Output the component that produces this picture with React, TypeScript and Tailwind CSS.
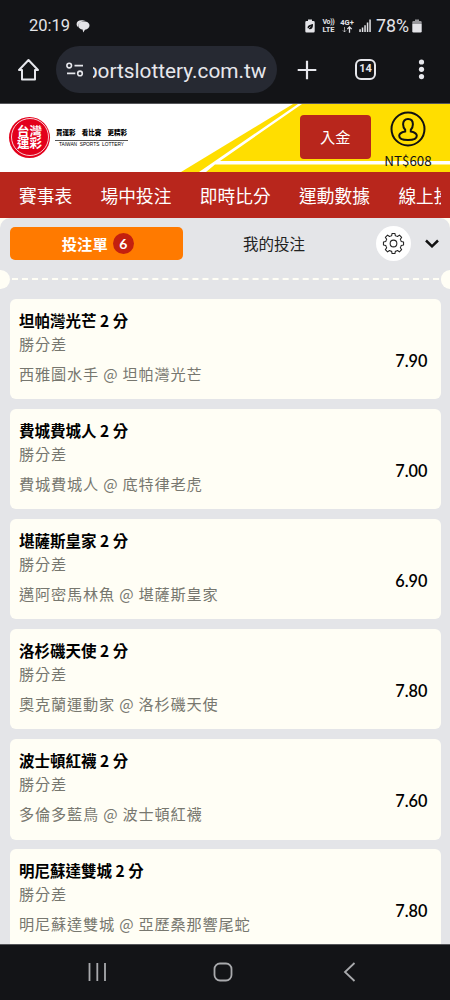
type Bet = {
  pick: string;
  market: string;
  match: string;
  odds: string;
};

const bets: Bet[] = [
  { pick: "坦帕灣光芒 2 分", market: "勝分差", match: "西雅圖水手 @ 坦帕灣光芒", odds: "7.90" },
  { pick: "費城費城人 2 分", market: "勝分差", match: "費城費城人 @ 底特律老虎", odds: "7.00" },
  { pick: "堪薩斯皇家 2 分", market: "勝分差", match: "邁阿密馬林魚 @ 堪薩斯皇家", odds: "6.90" },
  { pick: "洛杉磯天使 2 分", market: "勝分差", match: "奧克蘭運動家 @ 洛杉磯天使", odds: "7.80" },
  { pick: "波士頓紅襪 2 分", market: "勝分差", match: "多倫多藍鳥 @ 波士頓紅襪", odds: "7.60" },
  { pick: "明尼蘇達雙城 2 分", market: "勝分差", match: "明尼蘇達雙城 @ 亞歷桑那響尾蛇", odds: "7.80" },
];

const navItems = ["賽事表", "場中投注", "即時比分", "運動數據", "線上投注"];

const StatusBar = () => (
  <div className="flex h-[46px] items-center pt-[5px] pl-[29px] pr-[28px] text-[#e4e4e8]">
    <span className="font-['Roboto'] text-[16.5px] leading-5">20:19</span>
    <svg className="ml-[6px] h-[14px] w-[14px]" viewBox="0 0 14 14" fill="currentColor">
      <path d="M5.500 1.200C2.500 1.200.6 2.800.6 5c0 1.300.6 2.300 1.400 3.100C1.800 5 4.200 2.300 9.500 2.100 8.500 1.500 7 1.200 5.500 1.200Z" />
      <path d="M8 2.500c3.200 0 5.500 1.500 5.500 4 0 2.200-1.900 3.900-4.500 4.200L7.200 13.600l-.6-3C4.300 10.300 2.200 9 2.200 6.500c0-2.500 2.600-4 5.800-4Z" />
    </svg>
    <div className="ml-auto flex items-center">
      <svg className="h-[14px] w-[10px]" viewBox="0 0 10 14">
        <path fill="currentColor" d="M3 .5h4V2h1.500q1.200 0 1.200 1.200v9q0 1.300-1.200 1.300h-7Q.3 13.500.3 12.200v-9Q.3 2 1.500 2H3Z" />
        <path fill="#131417" d="M8 5c.2 3.400-.9 5.300-3.300 5.300-1 0-1.800-.5-2-1.200C2 7 4.500 5.700 8 5Z" />
        <path stroke="#e4e4e8" strokeWidth=".7" d="M2 11 5.500 7.600" />
      </svg>
      <div className="ml-[7px] flex w-[13px] flex-col items-center font-['Roboto'] text-[7.500px] font-bold leading-[7px]">
        <span className="text-[7px] tracking-[-0.300px]">Vo))</span>
        <span>LTE</span>
      </div>
      <div className="ml-[5px] flex w-[14px] flex-col items-center font-['Roboto'] text-[7.500px] font-bold leading-[7px]">
        <span>4G+</span>
        <svg className="h-[7px] w-[12px]" viewBox="0 0 12 7" fill="none" stroke="currentColor">
          <path opacity=".6" d="M3.500 1v5M1.800 4.300 3.500 6l1.700-1.700" />
          <path strokeWidth="1.300" d="M8.500 6.800V1M6.300 3.100 8.500.9l2.200 2.200" />
        </svg>
      </div>
      <svg className="ml-[5px] h-[13px] w-[12px]" viewBox="0 0 12 13" fill="currentColor">
        <path d="M.3 10.300h1.500V13H.3zM2.800 8.500h1.500V13H2.800zM5.300 6.200h1.500V13H5.300zM7.800 3.500h1.500V13H7.800zM10.300.5h1.500V13h-1.500z" />
      </svg>
      <span className="ml-[5px] font-['Roboto'] text-[17.800px] leading-5">78%</span>
      <svg className="ml-[3px] h-[14px] w-[10px]" viewBox="0 0 10 14">
        <path fill="#98989c" d="M3 .5h4V2h1.500Q9.700 2 9.700 3.200V5H.3V3.200Q.3 2 1.500 2H3Z" />
        <path fill="currentColor" d="M.3 5h9.400v7.200q0 1.300-1.200 1.300h-7Q.3 13.500.3 12.200Z" />
      </svg>
    </div>
  </div>
);

const BrowserBar = () => (
  <div className="flex h-[57.500px] items-start border-b border-[#55565a] text-[#e6e7ec]">
    <svg className="ml-[17px] mt-[12px] h-6 w-6" viewBox="0 0 24 24" fill="none" stroke="currentColor" strokeWidth="2" strokeLinejoin="round" strokeLinecap="round">
      <path d="M2 12 11.500 2 21 12h-3v9.500H5V12Z" />
    </svg>
    <div className="ml-[15px] flex h-[47px] w-[221px] items-center rounded-full bg-[#262932] pl-[10px]">
      <svg className="h-[18px] w-[18px] shrink-0" viewBox="0 0 18 18" fill="none" stroke="currentColor" strokeWidth="1.600">
        <circle cx="3.200" cy="4.600" r="2.300" />
        <path d="M8.500 4.600H17M1 12.400h8.300" />
        <circle cx="14" cy="12.400" r="2.300" />
      </svg>
      <div className="ml-[9px] mt-[3px] flex w-[173.500px] justify-end overflow-hidden font-['Roboto'] text-[20.800px] leading-7 whitespace-nowrap">
        sportslottery.com.tw
      </div>
    </div>
    <svg className="ml-[20px] mt-[14px] h-5 w-5" viewBox="0 0 20 20" fill="none" stroke="currentColor" strokeWidth="2.200">
      <path d="M10 .7v18.600M.7 10h18.600" />
    </svg>
    <div className="ml-[38px] mt-[13px] flex h-[21px] w-[21px] items-center justify-center rounded-[6px] border-2 border-[#e6e7ec] font-['Roboto'] text-[11px] font-bold">
      14
    </div>
    <svg className="ml-[42px] mt-[13px] h-[22px] w-2" viewBox="0 0 8 22" fill="currentColor">
      <circle cx="3.500" cy="3" r="2.600" />
      <circle cx="3.500" cy="10.300" r="2.600" />
      <circle cx="3.500" cy="17.600" r="2.600" />
    </svg>
  </div>
);

const SiteHeader = () => (
  <header className="relative flex h-[68px] items-start bg-white">
    <svg className="absolute inset-0 h-full w-full" viewBox="0 0 450 68" preserveAspectRatio="none">
      <path fill="#ffde00" d="M293 0H450V68H181Z" />
      <path fill="#fff" d="M298 0h4L220 57H450v3.500H215L206 68H199Z" />
    </svg>
    <div className="relative ml-[9px] mt-[13px] grid h-[41px] w-[41px] shrink-0 place-items-center rounded-full bg-[#e3001b]">
      <div className="flex h-[38px] w-[38px] flex-col items-center justify-center rounded-full border border-white/80 text-[12.500px] font-bold leading-[12.500px] text-white">
        <span>台灣</span>
        <span>運彩</span>
      </div>
    </div>
    <div className="relative ml-[5px] mt-[22px] w-[73px]">
      <div className="flex justify-between border-b border-[#555] px-[1px] pb-[2px] text-[6.500px] font-black leading-[12px] text-black">
        <span>買運彩</span>
        <span>看比賽</span>
        <span>更精彩</span>
      </div>
      <div className="pt-px text-center font-['Liberation_Sans'] text-[4.800px] leading-[6px] whitespace-nowrap text-black">
        TAIWAN&nbsp; SPORTS&nbsp; LOTTERY
      </div>
    </div>
    <button className="relative ml-[172px] mt-[11px] h-[44.500px] w-[70.500px] shrink-0 rounded-[4px] bg-[#b8261c] text-[15.200px] leading-none text-white">
      入金
    </button>
    <div className="relative ml-[11px] mt-[7px] flex w-[53px] flex-col items-center">
      <svg className="h-[36px] w-[36px]" viewBox="0 0 36 36" fill="none" stroke="#111" strokeWidth="2">
        <circle cx="18" cy="18" r="16.500" />
        <path d="M18 8c-3.200 0-4.900 2.200-4.900 5.300 0 2.400.9 4.200 2.100 5.500v1.600c-3.400.7-6 2-6 4.400 0 2.700 4 4.200 8.800 4.200s8.800-1.500 8.800-4.200c0-2.400-2.600-3.700-6-4.400v-1.600c1.200-1.300 2.100-3.100 2.100-5.500C22.900 10.200 21.200 8 18 8Z" />
      </svg>
      <span className="mt-[4px] text-[13.400px] leading-[18px] text-[#111]">NT$608</span>
    </div>
  </header>
);

const SlipTabs = () => (
  <div className="flex h-[52px] items-center pl-[9.500px]">
    <div className="flex h-[33px] w-[173.500px] items-center justify-center gap-[5px] rounded-[5px] bg-[#ff7a00] pl-[3px] text-[15.300px] font-bold text-white">
      投注單
      <span className="grid h-[21px] w-[21px] place-items-center rounded-full bg-[#c3200f] font-['Lato'] text-[14px] leading-none">6</span>
    </div>
    <div className="w-[182px] text-center text-[15.500px] text-[#222]">我的投注</div>
    <div className="ml-[11px] grid h-[35px] w-[35px] place-items-center rounded-full bg-white">
      {/* eight-toothed cog */}
      <svg className="h-[23px] w-[23px]" viewBox="0 0 24 24" fill="none" stroke="#222" strokeWidth="1.100" strokeLinejoin="round">
        <path d="M10.500 1.500h3l.4 2.300q1.300.3 2.300.9l2-1.400 2.300 2.300-1.400 2q.7 1 .9 2.300l2.500.6v3l-2.500.6q-.2 1.300-.9 2.300l1.400 2-2.300 2.300-2-1.400q-1 .7-2.300.9l-.4 2.300h-3l-.4-2.300q-1.300-.2-2.300-.9l-2 1.400-2.300-2.300 1.400-2q-.7-1-.9-2.300l-2.500-.6v-3l2.500-.6q.2-1.300.9-2.300l-1.400-2 2.300-2.300 2 1.400q1-.6 2.300-.9Z" />
        <circle cx="12" cy="12" r="3.500" />
      </svg>
    </div>
    <svg className="ml-[14px] h-[9px] w-[14px]" viewBox="0 0 14 9" fill="none" stroke="#111" strokeWidth="2.500">
      <path d="m1 1.500 6 5.800 6-5.800" />
    </svg>
  </div>
);

const BetCard = ({ bet }: { bet: Bet }) => (
  <div className="flex h-[100.500px] shrink-0 items-center justify-between rounded-[6px] bg-[#fffef5] pl-[9.500px] pr-[13px]">
    <div className="h-full pt-[9px]">
      <p className="text-[15.500px] font-bold leading-6 text-black">{bet.pick}</p>
      <p className="text-[15.200px] leading-[23px] tracking-[0.800px] text-[#77776f]">{bet.market}</p>
      <p className="mt-[7px] text-[15.200px] leading-[23px] tracking-[0.800px] text-[#77776f]">{bet.match}</p>
    </div>
    <span className="mt-[24px] font-['Lato'] text-[16.300px] font-semibold leading-6 text-black">{bet.odds}</span>
  </div>
);

export default function App() {
  return (
    <div className="flex h-[1000px] w-[450px] flex-col overflow-hidden bg-[#131417] font-['Noto_Sans_CJK_TC',sans-serif]">
      <StatusBar />
      <BrowserBar />
      <SiteHeader />
      <nav className="flex h-[46px] shrink-0 items-center bg-[#b8261c] px-[19px] pr-[9px]">
        <div className="flex gap-[28.500px] overflow-hidden text-[17.700px] leading-7 whitespace-nowrap text-white">
          {navItems.map((item) => (
            <span key={item}>{item}</span>
          ))}
        </div>
      </nav>
      <main className="min-h-0 flex-1 overflow-hidden bg-[#fffef5]">
        <div className="rounded-t-[10px] bg-[#e4e5e8]">
          <SlipTabs />
          <div className="flex h-[19px] items-center justify-between">
            <div className="h-[19px] w-[9.500px] rounded-r-full bg-[#fffef5]" />
            <div className="mx-[2px] flex-1 border-t-[2.500px] border-dashed border-[#fffef5]" />
            <div className="h-[19px] w-[9.500px] rounded-l-full bg-[#fffef5]" />
          </div>
          <div className="flex flex-col gap-[9.650px] px-[9.500px] pt-[10px]">
            {bets.map((bet) => (
              <BetCard key={bet.pick} bet={bet} />
            ))}
          </div>
        </div>
      </main>
      <footer className="flex h-[56px] shrink-0 items-center border-t border-[#55565a] pb-px text-[#a9aaad]">
        <svg className="ml-[87px] h-5 w-5" viewBox="0 0 20 20" stroke="currentColor" strokeWidth="1.800">
          <path d="M2.500 1v18M10.300 1v18M18 1v18" />
        </svg>
        <svg className="ml-[106px] h-5 w-5" viewBox="0 0 20 20" fill="none" stroke="currentColor" strokeWidth="1.800">
          <rect x="1.500" y="1.500" width="17" height="17" rx="5.500" />
        </svg>
        <svg className="ml-[110px] h-5 w-[14px]" viewBox="0 0 14 20" fill="none" stroke="currentColor" strokeWidth="1.800">
          <path d="M11.500 1 2 10l9.500 9" />
        </svg>
      </footer>
    </div>
  );
}
